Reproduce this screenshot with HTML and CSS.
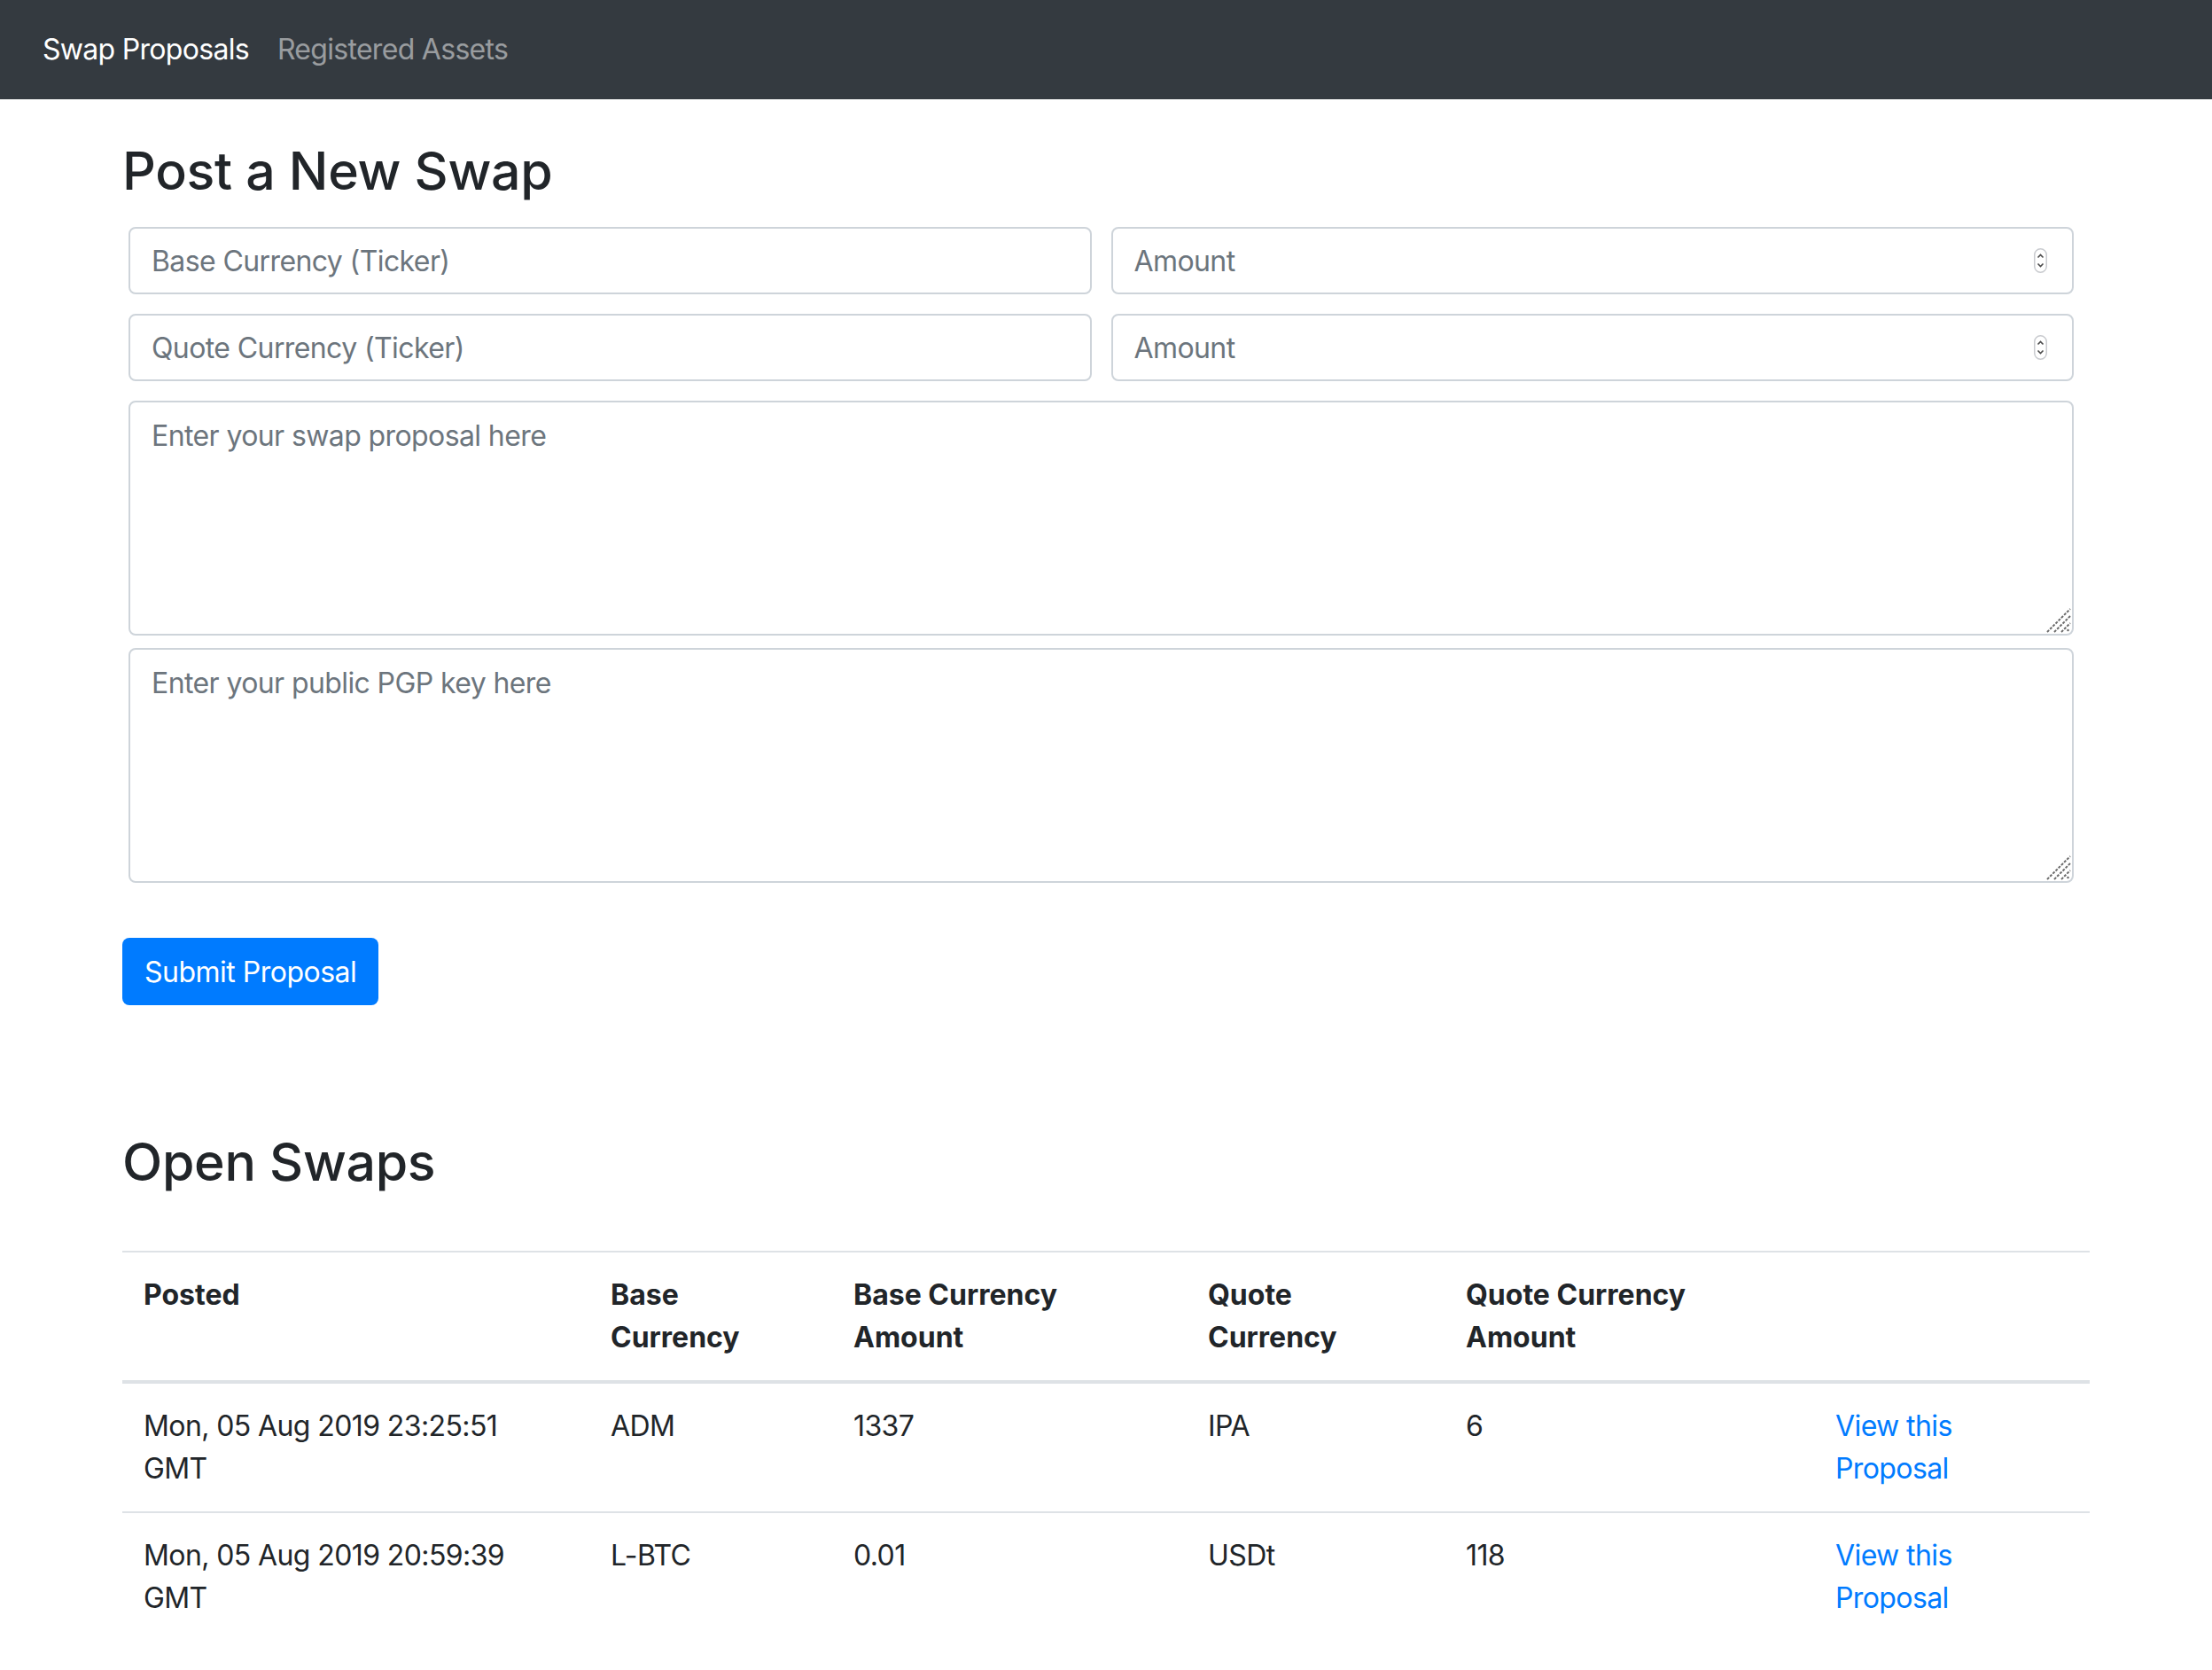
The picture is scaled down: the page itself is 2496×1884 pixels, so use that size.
FILE: index.html
```html
<!DOCTYPE html>
<html lang="en">
<head>
  <meta charset="UTF-8">
  <meta name="viewport" content="width=device-width, initial-scale=1.0">
  <title>Swap Proposals</title>
  <link rel="stylesheet" href="styles.css">
</head>
<body>

  <!-- Top navigation -->
  <nav class="navbar">
    <a class="nav-link active" href="/">Swap Proposals</a>
    <a class="nav-link" href="/assets">Registered Assets</a>
  </nav>

  <main class="container">
    <h1 class="page-title">Post a New Swap</h1>

    <form class="swap-form" onsubmit="return false;">
      <div class="fields">
        <div class="form-row">
          <input type="text" class="form-control" placeholder="Base Currency (Ticker)">
          <div class="number-field">
            <input type="text" class="form-control" placeholder="Amount">
            <svg class="stepper" width="15" height="28" viewBox="0 0 15 28">
              <rect x="0.75" y="0.75" width="13.5" height="26.5" rx="6.75" fill="#fff" stroke="#c9cbcf" stroke-width="1.5"/>
              <path d="M4.5 10.5 L7.5 7.5 L10.5 10.5" fill="none" stroke="#4a4a4a" stroke-width="1.6"/>
              <path d="M4.5 17.5 L7.5 20.5 L10.5 17.5" fill="none" stroke="#4a4a4a" stroke-width="1.6"/>
            </svg>
          </div>
        </div>
        <div class="form-row">
          <input type="text" class="form-control" placeholder="Quote Currency (Ticker)">
          <div class="number-field">
            <input type="text" class="form-control" placeholder="Amount">
            <svg class="stepper" width="15" height="28" viewBox="0 0 15 28">
              <rect x="0.75" y="0.75" width="13.5" height="26.5" rx="6.75" fill="#fff" stroke="#c9cbcf" stroke-width="1.5"/>
              <path d="M4.5 10.5 L7.5 7.5 L10.5 10.5" fill="none" stroke="#4a4a4a" stroke-width="1.6"/>
              <path d="M4.5 17.5 L7.5 20.5 L10.5 17.5" fill="none" stroke="#4a4a4a" stroke-width="1.6"/>
            </svg>
          </div>
        </div>

        <div class="textarea-field">
          <textarea class="form-control" placeholder="Enter your swap proposal here"></textarea>
          <svg class="grip" width="28" height="28" viewBox="0 0 28 28">
            <path d="M1 27 L27 1 M9 27 L27 9 M17 27 L27 17" stroke="#6b6b6b" stroke-width="2" stroke-dasharray="3 1.5"/>
            <circle cx="24.5" cy="25" r="1.3" fill="#6b6b6b"/>
          </svg>
        </div>
        <div class="textarea-field">
          <textarea class="form-control" placeholder="Enter your public PGP key here"></textarea>
          <svg class="grip" width="28" height="28" viewBox="0 0 28 28">
            <path d="M1 27 L27 1 M9 27 L27 9 M17 27 L27 17" stroke="#6b6b6b" stroke-width="2" stroke-dasharray="3 1.5"/>
            <circle cx="24.5" cy="25" r="1.3" fill="#6b6b6b"/>
          </svg>
        </div>
      </div>

      <button type="submit" class="btn-submit">Submit Proposal</button>
    </form>

    <h1 class="page-title section-title">Open Swaps</h1>

    <table class="swaps-table">
      <colgroup>
        <col style="width: 527px">
        <col style="width: 274px">
        <col style="width: 400px">
        <col style="width: 291px">
        <col style="width: 417px">
        <col style="width: 311px">
      </colgroup>
      <thead>
        <tr>
          <th>Posted</th>
          <th>Base Currency</th>
          <th>Base Currency Amount</th>
          <th>Quote Currency</th>
          <th>Quote Currency Amount</th>
          <th></th>
        </tr>
      </thead>
      <tbody>
        <tr>
          <td>Mon, 05 Aug 2019 23:25:51 GMT</td>
          <td>ADM</td>
          <td>1337</td>
          <td>IPA</td>
          <td>6</td>
          <td class="link-cell"><a href="/proposal/1">View this Proposal</a></td>
        </tr>
        <tr>
          <td>Mon, 05 Aug 2019 20:59:39 GMT</td>
          <td>L-BTC</td>
          <td>0.01</td>
          <td>USDt</td>
          <td>118</td>
          <td class="link-cell"><a href="/proposal/2">View this Proposal</a></td>
        </tr>
      </tbody>
    </table>
  </main>

</body>
</html>
```

FILE: styles.css
```css
/* Base */
body {
  margin: 0;
  font-family: Inter, 'Liberation Sans', sans-serif;
  font-size: 32px;
  line-height: 48px;
  letter-spacing: -0.6px;
  color: #212529;
  background-color: #fff;
}

a {
  color: #007bff;
  text-decoration: none;
}

/* Navbar */
.navbar {
  height: 112px;
  padding: 0 32px;
  display: flex;
  align-items: center;
  background-color: #343a40;
}

.nav-link {
  padding: 0 16px;
  font-size: 32px;
  letter-spacing: -0.7px;
  color: rgba(255, 255, 255, 0.5);
}

.nav-link.active {
  color: #fff;
}

/* Layout */
.container {
  width: 2220px;
  margin: 0 auto;
}

.page-title {
  margin: 46px 0 28px;
  font-size: 59px;
  line-height: 70px;
  font-weight: 500;
  letter-spacing: -0.3px;
}

.section-title {
  margin: 142px 0 65px;
}

/* Form */
.fields {
  padding: 0 18px 0 7px;
}

.form-row {
  display: grid;
  grid-template-columns: 1fr 1fr;
  gap: 22px;
  margin-bottom: 22px;
}

.form-row + .textarea-field {
  margin-top: 8px;
}

.form-control {
  box-sizing: border-box;
  width: 100%;
  height: 76px;
  padding: 0 24px;
  font-family: inherit;
  font-size: 32px;
  letter-spacing: -0.6px;
  color: #495057;
  background-color: #fff;
  border: 2px solid #ced4da;
  border-radius: 8px;
  outline: none;
}

.form-control::placeholder {
  color: #6c757d;
}

.number-field {
  position: relative;
}

.stepper {
  position: absolute;
  right: 30px;
  top: 24px;
}

.textarea-field {
  position: relative;
  margin-bottom: 14px;
}

.textarea-field textarea {
  display: block;
  height: 265px;
  padding: 14px 24px;
  line-height: 48px;
  resize: none;
}

.grip {
  position: absolute;
  right: 3px;
  bottom: 3px;
}

.btn-submit {
  margin-top: 48px;
  height: 76px;
  padding: 0 25px;
  font-family: inherit;
  font-size: 32px;
  letter-spacing: -0.5px;
  color: #fff;
  background-color: #007bff;
  border: none;
  border-radius: 8px;
  cursor: pointer;
}

/* Open swaps table */
.swaps-table {
  width: 100%;
  table-layout: fixed;
  border-collapse: collapse;
}

.swaps-table th,
.swaps-table td {
  padding: 24px;
  text-align: left;
  vertical-align: top;
  border-top: 2px solid #dee2e6;
}

.swaps-table th {
  font-weight: 700;
  letter-spacing: 0;
  border-bottom: 4px solid #dee2e6;
}

.swaps-table .link-cell {
  padding-right: 60px;
}
```
